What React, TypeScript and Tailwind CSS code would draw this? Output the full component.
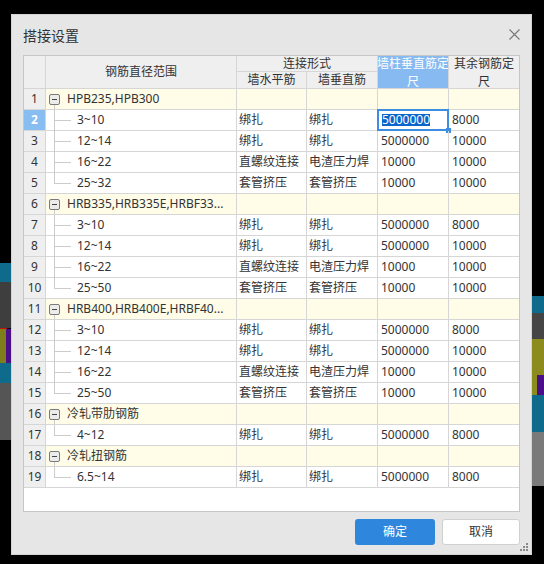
import React from 'react';

type Child = { range: string; a: string; b: string; c: string; d: string };
type Group = { no: number; name: string; children: Child[] };

const std = (last: string): Child[] => [
  { range: '3~10', a: '绑扎', b: '绑扎', c: '5000000', d: '8000' },
  { range: '12~14', a: '绑扎', b: '绑扎', c: '5000000', d: '10000' },
  { range: '16~22', a: '直螺纹连接', b: '电渣压力焊', c: '10000', d: '10000' },
  { range: last, a: '套管挤压', b: '套管挤压', c: '10000', d: '10000' },
];

const groups: Group[] = [
  { no: 1, name: 'HPB235,HPB300', children: std('25~32') },
  { no: 6, name: 'HRB335,HRB335E,HRBF33...', children: std('25~50') },
  { no: 11, name: 'HRB400,HRB400E,HRBF40...', children: std('25~50') },
  { no: 16, name: '冷轧带肋钢筋', children: [{ range: '4~12', a: '绑扎', b: '绑扎', c: '5000000', d: '8000' }] },
  { no: 18, name: '冷轧扭钢筋', children: [{ range: '6.5~14', a: '绑扎', b: '绑扎', c: '5000000', d: '8000' }] },
];

const line = 'border-[#d6d6d6]';

const GroupRow = ({ g }: { g: Group }) => (
  <div className={`flex h-[21px] border-b ${line}`}>
    <div className={`w-[22px] shrink-0 border-r ${line} bg-[#efefef] text-center leading-[20px]`}>{g.no}</div>
    <div className={`relative w-[191px] shrink-0 border-r ${line} bg-[#fffde8] pl-[21px] leading-[20px] whitespace-nowrap`}>
      <div className="absolute left-[3px] top-[5px] flex h-[11px] w-[11px] items-center justify-center rounded-[2px] border border-[#7a7a7a] bg-[#ececec]">
        <div className="h-px w-[5px] bg-[#444]" />
      </div>
      <div className="absolute bottom-0 left-[8px] top-[16px] w-px bg-[#cccccc]" />
      {g.name}
    </div>
    <div className={`w-[70px] shrink-0 border-r ${line} bg-[#fffde8]`} />
    <div className={`w-[71px] shrink-0 border-r ${line} bg-[#fffde8]`} />
    <div className={`w-[71px] shrink-0 border-r ${line} bg-[#fffde8]`} />
    <div className="w-[70px] shrink-0 bg-[#fffde8]" />
  </div>
);

const ChildRow = ({ no, c, last, selected }: { no: number; c: Child; last: boolean; selected: boolean }) => (
  <div className={`flex h-[21px] border-b ${line} bg-white`}>
    <div
      className={`w-[22px] shrink-0 border-r ${line} text-center leading-[20px] ${
        selected ? 'bg-[#88bdf2] font-bold text-white' : 'bg-[#efefef]'
      }`}
    >
      {no}
    </div>
    <div className={`relative w-[191px] shrink-0 border-r ${line} pl-[31px] leading-[20px]`}>
      <div className={`absolute left-[8px] top-0 w-px bg-[#cccccc] ${last ? 'h-[10px]' : 'h-[21px]'}`} />
      <div className="absolute left-[8px] top-[10px] h-px w-[17px] bg-[#cccccc]" />
      {c.range}
    </div>
    <div className={`w-[70px] shrink-0 border-r ${line} pl-[2px] leading-[20px] whitespace-nowrap`}>{c.a}</div>
    <div className={`w-[71px] shrink-0 border-r ${line} pl-[2px] leading-[20px] whitespace-nowrap`}>{c.b}</div>
    <div className={`relative w-[71px] shrink-0 border-r ${line} pl-[3px] leading-[20px]`}>
      {selected ? (
        <>
          <div className="absolute -left-px -top-px h-[22px] w-[72px] border-2 border-[#3d8ee0]" />
          <div className="absolute left-[68px] top-[18px] h-[5px] w-[5px] bg-[#3d8ee0]" />
          <span className="ml-px inline-block bg-[#0b66cc] leading-[12px] text-white">{c.c}</span>
        </>
      ) : (
        c.c
      )}
    </div>
    <div className="w-[70px] shrink-0 pl-[3px] leading-[20px]">{c.d}</div>
  </div>
);

export default function App() {
  let rowNo = 0;
  return (
    <div className="relative h-[564px] w-[544px] overflow-hidden bg-black pl-[11px] pt-[14px] font-['Noto_Sans','Noto_Sans_CJK_SC',sans-serif] text-[12px] text-[#333]">
      {/* scene behind the dialog */}
      <div className="absolute left-0 top-[263px] h-[19px] w-[11px] bg-[#0f6b8c]" />
      <div className="absolute left-0 top-[282px] h-[46px] w-[11px] bg-[#3e3e3e]" />
      <div className="absolute left-0 top-[328px] h-px w-[7px] bg-[#c01010]" />
      <div className="absolute left-0 top-[329px] h-[34px] w-[6px] bg-[#7e7e1b]" />
      <div className="absolute left-[6px] top-[329px] h-[34px] w-[5px] bg-[#4b0f8a]" />
      <div className="absolute left-0 top-[363px] h-[20px] w-[11px] bg-[#0f6b8c]" />
      <div className="absolute left-0 top-[383px] h-[57px] w-[11px] bg-[#555]" />
      <div className="absolute left-[532px] top-[296px] h-[17px] w-[12px] bg-[#0f6b8c]" />
      <div className="absolute left-[532px] top-[313px] h-[26px] w-[12px] bg-[#454545]" />
      <div className="absolute left-[532px] top-[339px] h-[56px] w-[12px] bg-[#8b8b1e]" />
      <div className="absolute left-[537px] top-[375px] h-[20px] w-[7px] bg-[#4b0f8a]" />
      <div className="absolute left-[532px] top-[395px] h-[37px] w-[12px] bg-[#0f6b8c]" />
      <div className="absolute left-[532px] top-[432px] h-[54px] w-[12px] bg-[#7a7a7a]" />

      <div className="relative z-10 flex h-[541px] w-[521px] flex-col border border-[#d4d4d4] bg-[#e6e6e6] px-[11px]">
        <div className="flex h-[40px] items-center justify-between">
          <span className="text-[14px] text-[#333]">搭接设置</span>
          <svg width="11" height="11" viewBox="0 0 11 11" className="mt-[-1px]">
            <path d="M0.5 0.5L10.5 10.5M10.5 0.5L0.5 10.5" stroke="#777" strokeWidth="1.1" fill="none" />
          </svg>
        </div>

        <div className="flex h-[457px] w-[497px] flex-col border border-[#c6c6c6] bg-white">
          {/* header */}
          <div className="flex h-[33px] bg-[#efefef]">
            <div className={`w-[22px] shrink-0 border-r border-b ${line}`} />
            <div className={`flex w-[191px] shrink-0 items-center justify-center border-r border-b ${line}`}>钢筋直径范围</div>
            <div className="flex w-[141px] shrink-0 flex-col">
              <div className={`h-[16px] border-r border-b ${line} text-center leading-[15px]`}>连接形式</div>
              <div className="flex h-[17px]">
                <div className={`w-[70px] border-r border-b ${line} text-center leading-[16px]`}>墙水平筋</div>
                <div className={`w-[71px] border-r border-b ${line} text-center leading-[16px]`}>墙垂直筋</div>
              </div>
            </div>
            <div className={`flex w-[71px] shrink-0 flex-col items-center justify-center overflow-hidden border-r border-b ${line} bg-[#86baf0] pt-px leading-[18px] whitespace-nowrap text-white`}>
              <span>墙柱垂直筋定</span>
              <span>尺</span>
            </div>
            <div className={`flex w-[70px] shrink-0 flex-col items-center justify-center overflow-hidden border-b ${line} pt-px leading-[18px] whitespace-nowrap`}>
              <span>其余钢筋定</span>
              <span>尺</span>
            </div>
          </div>

          {groups.map((g) => {
            rowNo = g.no;
            return (
              <React.Fragment key={g.no}>
                <GroupRow g={g} />
                {g.children.map((c, i) => {
                  rowNo += 1;
                  return (
                    <ChildRow
                      key={c.range + i}
                      no={rowNo}
                      c={c}
                      last={i === g.children.length - 1}
                      selected={rowNo === 2}
                    />
                  );
                })}
              </React.Fragment>
            );
          })}
        </div>

        <div className="mt-[7px] flex justify-end gap-[7px]">
          <button className="h-[26px] w-[80px] rounded-[3px] bg-[#2f86dd] text-[12px] text-white">确定</button>
          <button className="h-[26px] w-[78px] rounded-[3px] border border-[#d0d0d0] bg-white text-[12px] text-[#333]">取消</button>
        </div>

        <svg width="9" height="9" viewBox="0 0 9 9" className="absolute bottom-[2px] right-[2px]">
          <rect x="6" y="0" width="2" height="2" fill="#8a8a8a" />
          <rect x="3" y="3" width="2" height="2" fill="#8a8a8a" />
          <rect x="6" y="3" width="2" height="2" fill="#8a8a8a" />
          <rect x="0" y="6" width="2" height="2" fill="#8a8a8a" />
          <rect x="3" y="6" width="2" height="2" fill="#8a8a8a" />
          <rect x="6" y="6" width="2" height="2" fill="#8a8a8a" />
        </svg>
      </div>
    </div>
  );
}
